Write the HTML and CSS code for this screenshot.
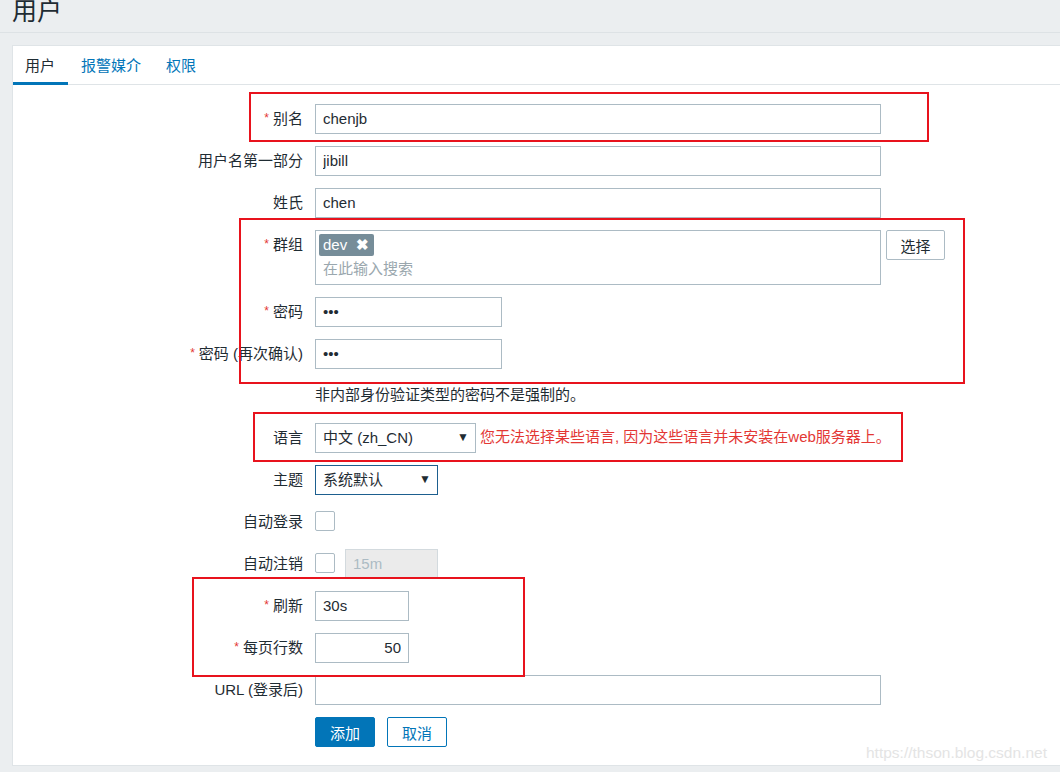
FILE: index.html
```
<!DOCTYPE html>
<html lang="zh-CN">
<head>
  <meta charset="UTF-8" />
  <meta name="viewport" content="width=device-width, initial-scale=1.0"/>
  <title>用户</title>
  <link rel="stylesheet" href="styles.css">
</head>
<body>

  <!-- 页头 -->
  <div class="header">
    <h1>用户</h1>
  </div>

  <div class="card">

    <!-- 标签页 -->
    <ul class="tabs">
      <li class="tab active">用户</li>
      <li class="tab">报警媒介</li>
      <li class="tab">权限</li>
    </ul>

    <!-- 表单 -->
    <form class="form" onsubmit="return false">
      <label class="label"><span class="req">*</span>别名</label>
      <div class="field"><input class="text wide" type="text" value="chenjb"></div>

      <label class="label">用户名第一部分</label>
      <div class="field"><input class="text wide" type="text" value="jibill"></div>

      <label class="label">姓氏</label>
      <div class="field"><input class="text wide" type="text" value="chen"></div>

      <label class="label"><span class="req">*</span>群组</label>
      <div class="field">
        <div class="multiselect">
          <span class="tag">dev <span class="tag-x">✖</span></span>
          <span class="placeholder">在此输入搜索</span>
        </div>
        <button class="btn-alt" type="button">选择</button>
      </div>

      <label class="label"><span class="req">*</span>密码</label>
      <div class="field"><input class="text medium" type="password" value="abc"></div>

      <label class="label"><span class="req">*</span>密码 (再次确认)</label>
      <div class="field"><input class="text medium" type="password" value="abc"></div>

      <div class="label"></div>
      <div class="field hint">非内部身份验证类型的密码不是强制的。</div>

      <label class="label">语言</label>
      <div class="field">
        <div class="select lang">中文 (zh_CN)</div>
        <span class="error">您无法选择某些语言, 因为这些语言并未安装在web服务器上。</span>
      </div>

      <label class="label">主题</label>
      <div class="field"><div class="select theme focus">系统默认</div></div>

      <label class="label">自动登录</label>
      <div class="field"><span class="checkbox"></span></div>

      <label class="label">自动注销</label>
      <div class="field">
        <span class="checkbox"></span>
        <input class="text small disabled" type="text" value="15m" disabled>
      </div>

      <label class="label"><span class="req">*</span>刷新</label>
      <div class="field"><input class="text short" type="text" value="30s"></div>

      <label class="label"><span class="req">*</span>每页行数</label>
      <div class="field"><input class="text short num" type="text" value="50"></div>

      <label class="label">URL (登录后)</label>
      <div class="field"><input class="text wide" type="text" value=""></div>

      <div class="label"></div>
      <div class="field buttons">
        <button class="btn" type="button">添加</button>
        <button class="btn-outline" type="button">取消</button>
      </div>
    </form>

  </div>

  <!-- 截图标注 -->
  <div class="mark mark-1"></div>
  <div class="mark mark-2"></div>
  <div class="mark mark-3"></div>
  <div class="mark mark-4"></div>

  <div class="watermark">https://thson.blog.csdn.net</div>

</body>
</html>
```

FILE: styles.css
```
html, body {
  margin: 0;
  height: 100%;
}

body {
  position: relative;
  overflow: hidden;
  background-color: #ebeef0;
  color: #1f2c33;
  font-family: 'Liberation Sans', Arial, 'Noto Sans CJK SC', sans-serif;
  font-size: 15px;
}

.header {
  height: 32px;
  padding: 0 12px;
  border-bottom: 1px solid #dde2e5;
  overflow: hidden;
}

h1 {
  margin: -4px 0 0;
  font-size: 25px;
  line-height: 30px;
  font-weight: normal;
}

.card {
  margin: 12px -20px 0 12px;
  height: 721px;
  background: #fff;
  border: 1px solid #dfe4e7;
  box-sizing: border-box;
}

.tabs {
  display: flex;
  height: 38px;
  margin: 0;
  padding: 0;
  list-style: none;
  border-bottom: 1px solid #dfe4e7;
}

.tab {
  position: relative;
  padding: 0 12px 0 13px;
  line-height: 39px;
  color: #0275b8;
}

.tab.active {
  color: #1f2c33;
  padding: 0 13px 0 12px;
}

.tab.active::after {
  content: "";
  position: absolute;
  left: 0;
  right: 0;
  bottom: -1px;
  height: 3px;
  background: #0275b8;
}

.form {
  display: grid;
  grid-template-columns: 290px 1fr;
  column-gap: 12px;
  row-gap: 12px;
  padding-top: 19px;
}

.label {
  display: flex;
  justify-content: flex-end;
  align-items: center;
  height: 30px;
  box-sizing: border-box;
  padding-bottom: 3px;
  white-space: nowrap;
}

.req {
  color: #e33734;
  font-size: 12px;
  line-height: 1;
  margin-right: 4px;
  margin-top: 0;
}

.field {
  display: flex;
  align-items: flex-start;
  min-height: 30px;
}

.text {
  height: 30px;
  box-sizing: border-box;
  padding: 0 7px 1px;
  border: 1px solid #acbbc4;
  border-radius: 0;
  font: inherit;
  color: #1f2c33;
  background: #fff;
  outline: none;
}

.wide { width: 566px; }
.medium { width: 187px; }
.short { width: 94px; }
.small { width: 93px; margin-left: 10px; }

.num { text-align: right; }

.disabled {
  background: #ebebeb;
  border-color: #d3dade;
  color: #acbbc4;
}

.multiselect {
  width: 566px;
  height: 55px;
  box-sizing: border-box;
  border: 1px solid #acbbc4;
  padding: 3px 3px 0;
}

.tag {
  display: inline-block;
  height: 22px;
  line-height: 22px;
  padding: 0 5px 0 4px;
  border-radius: 2px;
  background: #768d99;
  color: #fff;
}

.tag-x {
  margin-left: 5px;
  font-size: 15px;
  font-weight: bold;
}

.placeholder {
  display: block;
  margin: 3px 0 0 4px;
  color: #9aa7ae;
  line-height: 20px;
}

.btn-alt {
  height: 30px;
  width: 59px;
  margin-left: 5px;
  border: 1px solid #acbbc4;
  border-radius: 2px;
  background: #fff;
  font: inherit;
  color: #1f2c33;
}

.hint {
  line-height: 28px;
}

.field .select {
  position: relative;
  height: 30px;
  box-sizing: border-box;
  padding: 0 7px;
  line-height: 27px;
  border: 1px solid #acbbc4;
}

.select::after {
  content: "▼";
  position: absolute;
  right: 6px;
  top: 0;
  font-size: 12px;
}

.lang { width: 161px; }
.theme { width: 123px; }

.field .focus {
  border-color: #1d5f8f;
}

.error {
  margin-left: 4px;
  line-height: 27px;
  color: #e33734;
}

.checkbox {
  display: block;
  width: 20px;
  height: 20px;
  margin-top: 4px;
  box-sizing: border-box;
  border: 1px solid #acbbc4;
  border-radius: 2px;
}

.buttons {
  gap: 12px;
}

.btn, .btn-outline {
  width: 60px;
  height: 30px;
  border-radius: 2px;
  font: inherit;
  cursor: pointer;
}

.btn {
  border: 1px solid #0275b8;
  background: #0275b8;
  color: #fff;
}

.btn-outline {
  border: 1px solid #0275b8;
  background: #fff;
  color: #0275b8;
}

.mark {
  position: absolute;
  border: 2px solid #e8131d;
  box-sizing: border-box;
}

.mark-1 { left: 249px; top: 92px; width: 680px; height: 50px; }
.mark-2 { left: 239px; top: 218px; width: 726px; height: 166px; }
.mark-3 { left: 253px; top: 412px; width: 650px; height: 50px; }
.mark-4 { left: 192px; top: 577px; width: 333px; height: 100px; }

.watermark {
  position: absolute;
  left: 866px;
  top: 744px;
  font-size: 15.5px;
  color: #e4e4e4;
}
```
